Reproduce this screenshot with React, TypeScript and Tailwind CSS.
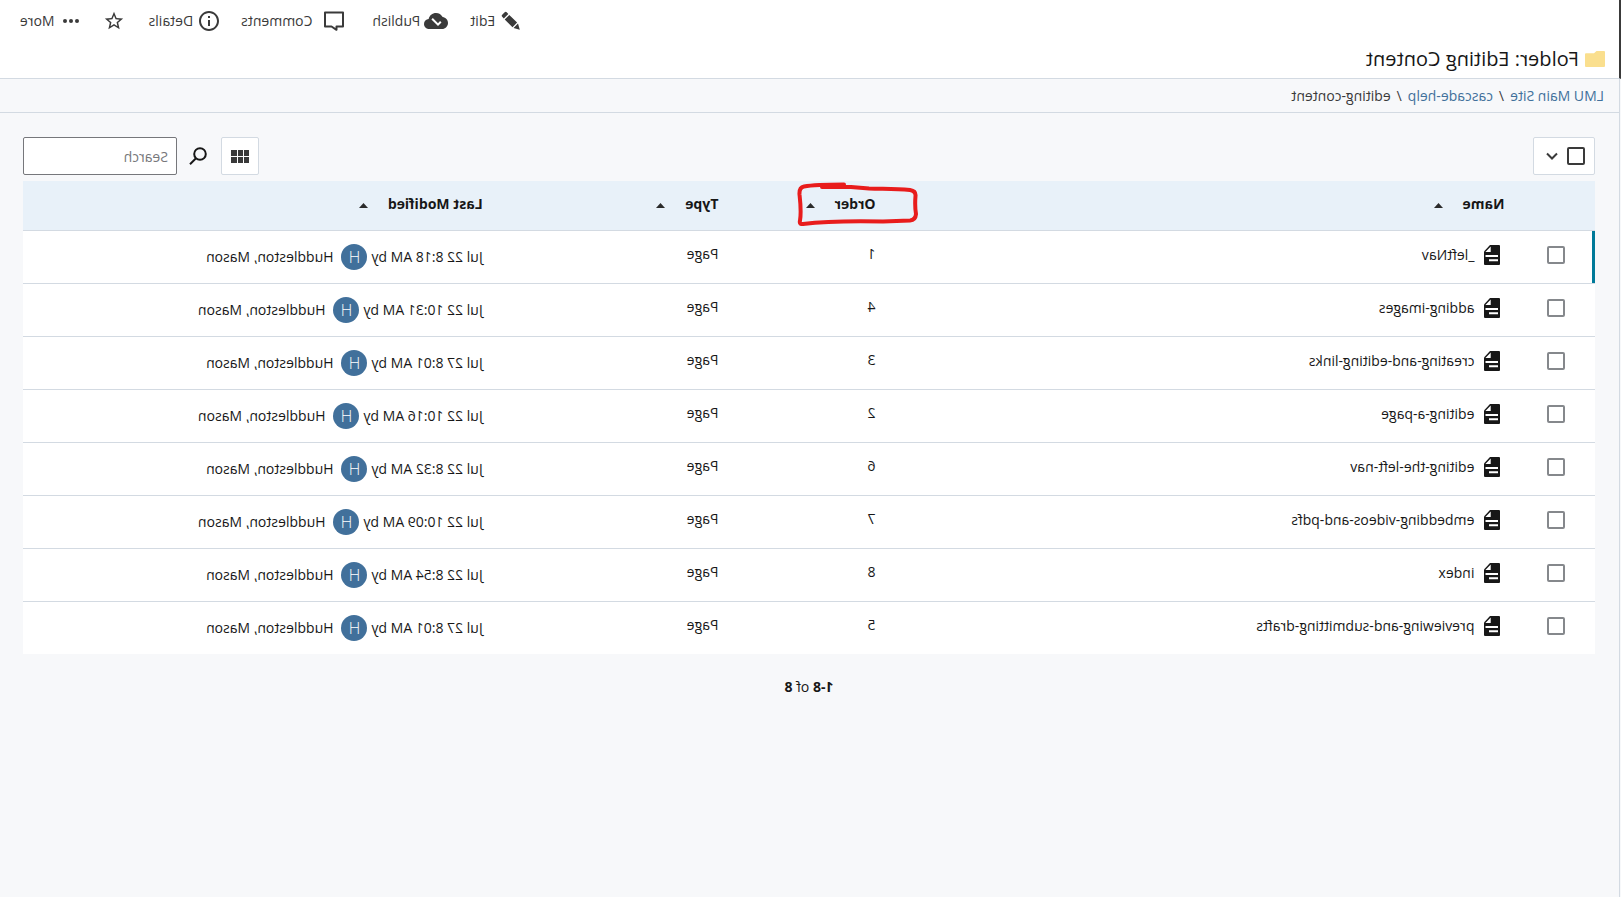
import { useState } from "react";
import type { ReactNode } from "react";

type Row = { name: string; order: number; date: string };

const rows: Row[] = [
  { name: "_leftNav", order: 1, date: "Jul 22 8:18 AM" },
  { name: "adding-images", order: 4, date: "Jul 22 10:31 AM" },
  { name: "creating-and-editing-links", order: 3, date: "Jul 27 8:01 AM" },
  { name: "editing-a-page", order: 2, date: "Jul 22 10:16 AM" },
  { name: "editing-the-left-nav", order: 6, date: "Jul 22 8:32 AM" },
  { name: "embedding-videos-and-pdfs", order: 7, date: "Jul 22 10:09 AM" },
  { name: "index", order: 8, date: "Jul 22 8:54 AM" },
  { name: "previewing-and-submitting-drafts", order: 5, date: "Jul 27 8:01 AM" },
];

function PencilIcon() {
  return (
    <svg className="h-5 w-5" viewBox="0 0 20 20" fill="currentColor" aria-hidden="true">
      <path d="M1.2 18.8 3 12.6l4.5 4.5zM3.9 11.6l7.8-7.7 4.6 4.6-7.8 7.7zM12.7 2.9l1.6-1.6a1.4 1.4 0 0 1 2 0l2.5 2.5a1.4 1.4 0 0 1 0 2l-1.6 1.7z" />
    </svg>
  );
}

function CloudIcon() {
  return (
    <svg className="h-6 w-6" viewBox="0 0 24 24" fill="currentColor" aria-hidden="true">
      <path d="M19.35 10.04C18.67 6.59 15.64 4 12 4 9.11 4 6.6 5.64 5.35 8.04 2.34 8.36 0 10.91 0 14c0 3.31 2.69 6 6 6h13c2.76 0 5-2.24 5-5 0-2.64-2.05-4.78-4.65-4.96zM10 17l-3.5-3.5 1.41-1.41L10 14.17 15.18 9l1.41 1.41L10 17z" />
    </svg>
  );
}

function CommentIcon() {
  return (
    <svg className="h-5 w-5" viewBox="0 0 20 20" fill="none" stroke="currentColor" strokeWidth="2" aria-hidden="true">
      <path d="M1 1.500h18v14h-6.500l-5 3.300v-3.300H1z" strokeLinejoin="round" />
    </svg>
  );
}

function InfoIcon() {
  return (
    <svg className="h-6 w-6" viewBox="0 0 24 24" fill="currentColor" aria-hidden="true">
      <path d="M11 7h2v2h-2zm0 4h2v6h-2zm1-9C6.48 2 2 6.48 2 12s4.48 10 10 10 10-4.48 10-10S17.52 2 12 2zm0 18c-4.41 0-8-3.59-8-8s3.59-8 8-8 8 3.59 8 8-3.59 8-8 8z" />
    </svg>
  );
}

function StarIcon() {
  return (
    <svg className="h-[22px] w-[22px]" viewBox="0 0 24 24" fill="currentColor" aria-hidden="true">
      <path d="m22 9.24-7.19-.62L12 2 9.19 8.63 2 9.24l5.46 4.73L5.82 21 12 17.27 18.18 21l-1.63-7.03L22 9.24zM12 15.4l-3.76 2.27 1-4.28-3.32-2.88 4.38-.38L12 6.1l1.71 4.04 4.38.38-3.32 2.88 1 4.28L12 15.4z" />
    </svg>
  );
}

function DotsIcon() {
  return (
    <svg className="h-4 w-4" viewBox="0 0 16 16" fill="currentColor" aria-hidden="true">
      <circle cx="2" cy="8" r="2" />
      <circle cx="8" cy="8" r="2" />
      <circle cx="14" cy="8" r="2" />
    </svg>
  );
}

function FolderIcon() {
  return (
    <svg className="h-4 w-5" viewBox="0 0 20 16" fill="#fadf8e" aria-hidden="true">
      <path d="M1 0h7.500l2.500 2.200h8a1 1 0 0 1 1 1V15a1 1 0 0 1-1 1H1a1 1 0 0 1-1-1V1a1 1 0 0 1 1-1z" />
    </svg>
  );
}

function FileIcon() {
  return (
    <svg className="h-5 w-4 shrink-0" viewBox="0 0 16 20" aria-hidden="true">
      <path fill="#171717" d="M1 0h9l6 6.500V19a1 1 0 0 1-1 1H1a1 1 0 0 1-1-1V1a1 1 0 0 1 1-1z" />
      <path fill="#fff" d="M9.300 1.500V7H14.600zM2 10h12.500v2H2zM2 14.300h9v2H2z" />
    </svg>
  );
}

function SearchIcon() {
  return (
    <svg className="h-[18px] w-[18px]" viewBox="0 0 18 18" fill="none" stroke="#171717" strokeWidth="2" aria-hidden="true">
      <circle cx="7" cy="7" r="5.800" />
      <path d="m11 11.200 6 6" />
    </svg>
  );
}

function GridIcon() {
  return (
    <svg className="h-[13px] w-[18px]" viewBox="0 0 18 13" fill="#3a3a3a" aria-hidden="true">
      <path d="M0 0h5v6H0zM6 0h5v6H6zM12 0h6v6h-6zM0 7h5v6H0zM6 7h5v6H6zM12 7h6v6h-6z" />
    </svg>
  );
}

function Checkbox({ label, dark = false }: { label: string; dark?: boolean }) {
  return (
    <input
      type="checkbox"
      aria-label={label}
      className={
        "block h-[18px] w-[18px] shrink-0 appearance-none rounded-xs border-2 bg-white checked:bg-[#41709b] " +
        (dark ? "border-[#3a3a3a]" : "border-[#85888c]")
      }
    />
  );
}

function Action({ children, icon, className }: { children: ReactNode; icon: ReactNode; className: string }) {
  return (
    <button type="button" className={"flex items-center " + className}>
      {icon}
      {children}
    </button>
  );
}

function RedMarker() {
  return (
    <svg
      className="pointer-events-none absolute -top-3 -left-[43px] h-11 w-[122px]"
      viewBox="0 0 122 44"
      fill="none"
      stroke="#e81c1c"
      strokeWidth="4"
      strokeLinecap="round"
      strokeLinejoin="round"
      aria-hidden="true"
    >
      <path d="M75 2.500c14 0 29 0 40 2q5 1 4.500 8c-1 9-2 17-.5 26q1 4-3 3.500C92 39 60 39 36 39.500L9 38.500Q3.500 38 3 32C4 26 4 20 3.500 14Q3 9 9 8C24 6.500 35 7 50 6.500L68 5h29" />
    </svg>
  );
}

function SortHeader({ children, className, marked = false }: { children: string; className: string; marked?: boolean }) {
  return (
    <th scope="col" className={"px-3 pb-1 text-left font-bold " + className}>
      <div className="relative">
        <button type="button" className="flex items-center gap-5">
          {children}
          <svg className="mt-1 h-[5px] w-[9px]" viewBox="0 0 9 5" fill="#2b2b2b" aria-hidden="true">
            <path d="M0 5 4.500 0 9 5z" />
          </svg>
        </button>
        {marked && <RedMarker />}
      </div>
    </th>
  );
}

export default function App() {
  const [query, setQuery] = useState("");

  return (
    <div className="flex min-h-screen -scale-x-100 flex-col bg-[#f7f8fa] font-['Open_Sans',sans-serif] text-sm text-[#171717]">
      <header className="flex h-[79px] flex-col justify-between border-b border-l-2 border-b-[#d3dae2] border-l-[#3a3a3a] bg-white">
        <nav aria-label="Actions" className="flex h-[42px] items-center justify-end pr-5 text-[#3a3a3a]">
          <Action icon={<PencilIcon />} className="mr-[22px] gap-[6px]">Edit</Action>
          <Action icon={<CloudIcon />} className="mr-7 gap-1">Publish</Action>
          <Action icon={<CommentIcon />} className="mr-5 gap-3">Comments</Action>
          <Action icon={<InfoIcon />} className="mr-6 gap-1">Details</Action>
          <button type="button" aria-label="Favorite" className="mr-6">
            <StarIcon />
          </button>
          <Action icon={<DotsIcon />} className="gap-2">More</Action>
        </nav>
        <h1 className="flex h-9 items-center gap-[6px] pb-[2px] pl-[14px] text-xl">
          <FolderIcon />
          Folder: Editing Content
        </h1>
      </header>

      <div className="ml-px flex grow flex-col border-l border-[#d3dae2]">
        <nav aria-label="Breadcrumb" className="flex h-[34px] items-center gap-[6px] border-b border-[#d3dae2] pl-[15px] text-[#3a3a3a]">
          <a href="#site" className="text-[#41709b]">LMU Main Site</a>
          <span>/</span>
          <a href="#cascade-help" className="text-[#41709b]">cascade-help</a>
          <span>/</span>
          <span>editing-content</span>
        </nav>

        <main className="flex flex-col pt-6 pr-[23px] pl-6">
          <div className="mb-[6px] flex items-center">
            <div className="flex h-[38px] items-center gap-[9px] rounded-xs border border-[#d3dae2] bg-white pr-3 pl-[9px]">
              <Checkbox label="Select all" dark />
              <button type="button" aria-label="Selection options">
                <svg className="h-3 w-3" viewBox="0 0 12 12" fill="none" stroke="#3a3a3a" strokeWidth="2" aria-hidden="true">
                  <path d="m1 3.500 5 5 5-5" />
                </svg>
              </button>
            </div>
            <button
              type="button"
              aria-label="Grid view"
              className="mr-[14px] ml-auto flex h-[38px] w-[38px] items-center justify-center rounded-xs border border-[#d3dae2] bg-white"
            >
              <GridIcon />
            </button>
            <label htmlFor="search" aria-label="Search" className="mr-3">
              <SearchIcon />
            </label>
            <input
              id="search"
              type="text"
              placeholder="Search"
              value={query}
              onChange={(e) => setQuery(e.target.value)}
              className="h-[38px] w-[154px] rounded-xs border border-[#76777b] bg-white px-2 placeholder:text-[#76777b]"
            />
          </div>

          <table className="w-full table-fixed border-separate border-spacing-0 bg-white">
            <thead>
              <tr className="h-[50px] bg-[#e8f1f9] *:border-b *:border-[#d3dae2]">
                <td className="w-[5%]" />
                <SortHeader className="w-[40%]">Name</SortHeader>
                <SortHeader className="w-[10%]" marked>Order</SortHeader>
                <SortHeader className="w-[15%]">Type</SortHeader>
                <SortHeader className="w-[30%]">Last Modified</SortHeader>
              </tr>
            </thead>
            <tbody>
              {rows.map((row, i) => (
                <tr key={row.name} className="h-[53px] *:border-b *:border-[#d3dae2] last:h-[52px] last:*:border-b-0">
                  <td className={"pb-1 pl-[30px] " + (i === 0 ? "shadow-[inset_3px_0_0_#007a99]" : "")}>
                    <Checkbox label={"Select " + row.name} />
                  </td>
                  <td className="px-4 pb-1">
                    <span className="flex items-center gap-[10px]">
                      <FileIcon />
                      {row.name}
                    </span>
                  </td>
                  <td className="px-3 pb-[6px]">{row.order}</td>
                  <td className="px-3 pb-[6px]">Page</td>
                  <td className="px-3">
                    <span className="flex items-center">
                      {row.date} by
                      <span className="mr-2 ml-1 flex h-[26px] w-[26px] items-center justify-center rounded-full bg-[#41709b] text-base font-light text-white">
                        H
                      </span>
                      Huddleston, Mason
                    </span>
                  </td>
                </tr>
              ))}
            </tbody>
          </table>

          <p className="pt-[23px] text-center">
            <b>1-8</b> of <b>8</b>
          </p>
        </main>
      </div>
    </div>
  );
}
